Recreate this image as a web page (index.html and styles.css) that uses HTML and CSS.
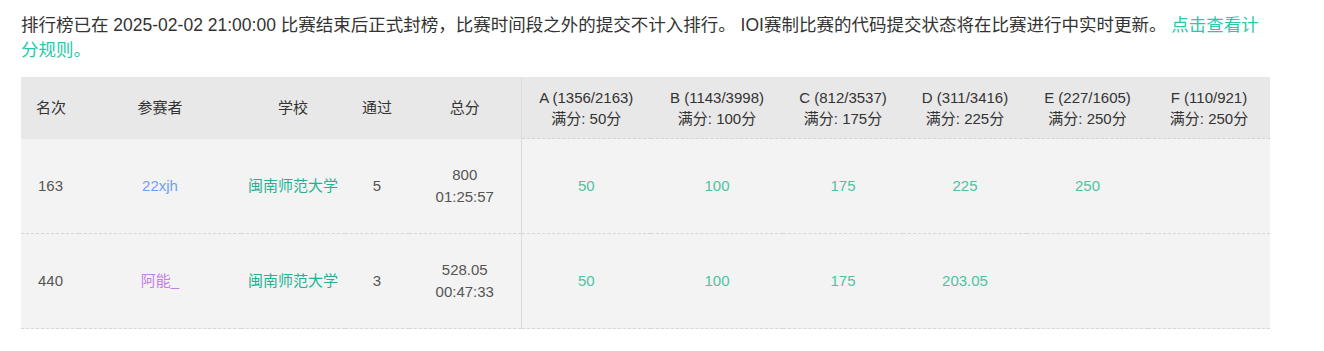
FILE: index.html
```html
<!DOCTYPE html>
<html lang="zh-CN">
<head>
<meta charset="utf-8">
<title>排行榜</title>
<link rel="stylesheet" href="styles.css">
</head>
<body>
<div class="page">
  <p class="notice">排行榜已在 2025-02-02 21:00:00 比赛结束后正式封榜，比赛时间段之外的提交不计入排行。 IOI赛制比赛的代码提交状态将在比赛进行中实时更新。 <a class="rule-link" href="#">点击查看计分规则。</a></p>
  <table class="rank">
    <colgroup>
      <col class="c-rank"><col class="c-user"><col class="c-school"><col class="c-pass"><col class="c-total">
      <col class="c-a"><col class="c-b"><col class="c-c"><col class="c-d"><col class="c-e"><col class="c-f">
    </colgroup>
    <thead>
      <tr>
        <th>名次</th>
        <th>参赛者</th>
        <th>学校</th>
        <th>通过</th>
        <th>总分</th>
        <th class="prob first">A (1356/2163)<br>满分: 50分</th>
        <th class="prob">B (1143/3998)<br>满分: 100分</th>
        <th class="prob">C (812/3537)<br>满分: 175分</th>
        <th class="prob">D (311/3416)<br>满分: 225分</th>
        <th class="prob">E (227/1605)<br>满分: 250分</th>
        <th class="prob">F (110/921)<br>满分: 250分</th>
      </tr>
    </thead>
    <tbody>
      <tr>
        <td>163</td>
        <td class="user blue">22xjh</td>
        <td class="school">闽南师范大学</td>
        <td>5</td>
        <td>800<br>01:25:57</td>
        <td class="score first">50</td>
        <td class="score">100</td>
        <td class="score">175</td>
        <td class="score">225</td>
        <td class="score">250</td>
        <td class="score"></td>
      </tr>
      <tr>
        <td>440</td>
        <td class="user purple">阿能_</td>
        <td class="school">闽南师范大学</td>
        <td>3</td>
        <td>528.05<br>00:47:33</td>
        <td class="score first">50</td>
        <td class="score">100</td>
        <td class="score">175</td>
        <td class="score">203.05</td>
        <td class="score"></td>
        <td class="score"></td>
      </tr>
    </tbody>
  </table>
</div>
</body>
</html>
```
FILE: styles.css
```css
html, body {
  margin: 0;
  padding: 0;
  background: #fff;
}

body {
  font-family: "Liberation Sans", Arial, "Noto Sans CJK SC", sans-serif;
  color: #333;
}

.page {
  padding: 13px 0 0 21px;
  width: 1249px;
}

.notice {
  margin: 0 0 14px 0;
  font-size: 17.5px;
  line-height: 25px;
  color: #333;
}

.rule-link {
  color: #2bc7aa;
  text-decoration: none;
}

.rank {
  width: 1249px;
  border-collapse: collapse;
  table-layout: fixed;
  font-size: 15px;
}

.c-rank { width: 58px; }
.c-user { width: 162px; }
.c-school { width: 104px; }
.c-pass { width: 64px; }
.c-total { width: 112px; }
.c-a { width: 130px; }
.c-b { width: 132px; }
.c-c { width: 120px; }
.c-d { width: 124px; }
.c-e { width: 121px; }
.c-f { width: 122px; }

.rank th {
  background: #e8e8e8;
  font-weight: normal;
  color: #333;
  height: 61px;
  padding: 0;
  line-height: 21px;
  text-align: center;
  vertical-align: middle;
}

.rank th:first-child {
  text-align: left;
  padding-left: 15px;
}

.rank th.prob {
  border-bottom: 1px dashed #d6d6d6;
}

.rank th.first,
.rank td.first {
  border-left: 1px solid #dcdcdc;
}

.rank td {
  background: #f3f3f3;
  color: #555;
  height: 94px;
  padding: 0;
  text-align: center;
  vertical-align: middle;
  line-height: 22px;
  border-bottom: 1px dashed #d6d6d6;
}

.rank td:first-child {
  text-align: left;
  padding-left: 17px;
}

.rank td.user.blue { color: #6f9ff5; }
.rank td.user.purple { color: #c77de8; }
.rank td.school { color: #1fb394; }
.rank td.score { color: #4cc3a2; }
```
